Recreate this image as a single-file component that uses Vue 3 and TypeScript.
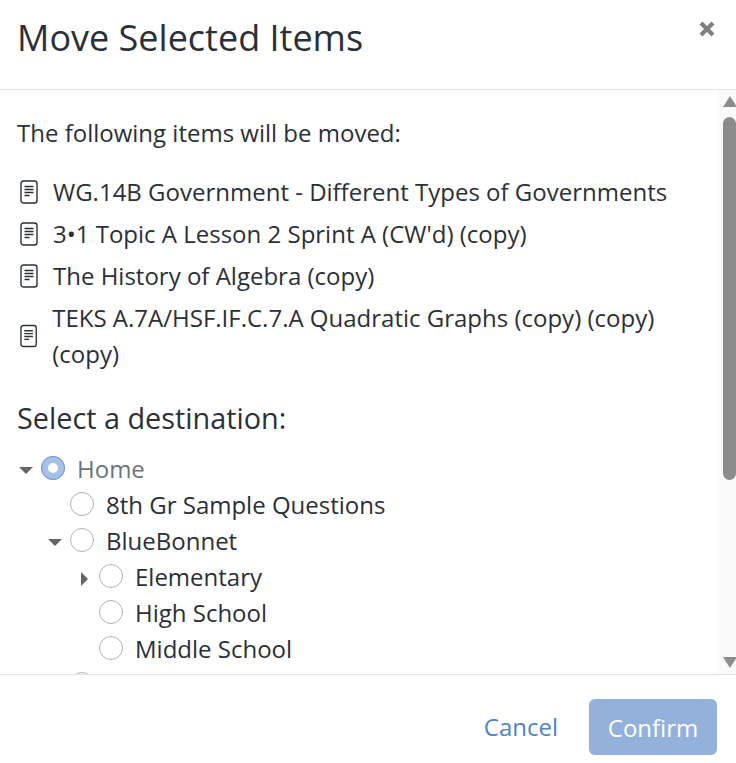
<script setup lang="ts">
interface TreeRow { label: string; depth: number; caret?: 'down' | 'right'; checked?: boolean }
const items = [
  'WG.14B Government - Different Types of Governments',
  "3•1 Topic A Lesson 2 Sprint A (CW'd) (copy)",
  'The History of Algebra (copy)',
  'TEKS A.7A/HSF.IF.C.7.A Quadratic Graphs (copy) (copy) (copy)',
]
const tree: TreeRow[] = [
  { label: 'Home', depth: 0, caret: 'down', checked: true },
  { label: '8th Gr Sample Questions', depth: 1 },
  { label: 'BlueBonnet', depth: 1, caret: 'down' },
  { label: 'Elementary', depth: 2, caret: 'right' },
  { label: 'High School', depth: 2 },
  { label: 'Middle School', depth: 2 },
  { label: '', depth: 1 },
]
</script>

<template>
  <div class="dialog">
    <header class="head">
      <h1>Move Selected Items</h1>
      <svg class="close" width="18" height="18" viewBox="0 0 18 18">
        <path d="M3 3 15 15M15 3 3 15" stroke="#808080" stroke-width="4.2" />
      </svg>
    </header>
    <main class="body">
      <div class="content">
        <p class="intro">The following items will be moved:</p>
        <ul class="items">
          <li v-for="item in items" :key="item">
            <svg class="doc" width="18" height="24" viewBox="0 0 18 24" fill="none">
              <rect x="1" y="1" width="16" height="22" rx="2.5" stroke="#2b3038" stroke-width="1.4" />
              <path d="M4.5 6.5h9M4.5 9.5h9M4.5 12.5h9M4.5 15.5h5" stroke="#2b3038" stroke-width="1.4" />
            </svg>
            <span>{{ item }}</span>
          </li>
        </ul>
        <h2>Select a destination:</h2>
        <div class="tree">
          <div v-for="(row, i) in tree" :key="i" class="row" :class="`d${row.depth}`">
            <span class="caret" :class="row.caret"></span>
            <span class="radio" :class="{ on: row.checked }"></span>
            <span class="label" :class="{ muted: row.checked }">{{ row.label }}</span>
          </div>
        </div>
      </div>
      <div class="scrollbar">
        <span class="arrow up"></span>
        <span class="thumb"></span>
        <span class="arrow down"></span>
      </div>
    </main>
    <footer class="foot">
      <a class="cancel">Cancel</a>
      <button class="confirm">Confirm</button>
    </footer>
  </div>
</template>

<style scoped>
.dialog {
  width: 736px;
  height: 763px;
  display: flex;
  flex-direction: column;
  background: #fff;
  color: #2b3038;
  font-family: "Open Sans", sans-serif;
  font-size: 24px;
  overflow: hidden;
}
.head {
  height: 90px;
  flex: none;
  box-sizing: border-box;
  border-bottom: 1px solid #e2e4e8;
  display: flex;
  justify-content: space-between;
  padding: 0 20px 0 17px;
}
h1 { margin: 12px 0 0; font-size: 36px; font-weight: 400; line-height: 52px; }
.close { margin-top: 20px; }
.body { flex: 1; min-height: 0; display: flex; overflow: hidden; }
.content { flex: 1; min-width: 0; padding: 0 0 0 17px; }
.intro { margin: 25px 0 0; line-height: 36px; }
.items { list-style: none; margin: 20px 0 0; padding: 0; }
.items li { display: flex; align-items: center; gap: 15px; padding: 3px 20px 3px 3px; line-height: 36px; }
.doc { flex: 0 1 18px; min-width: 0; }
h2 { margin: 21px 0 0; font-size: 28.8px; font-weight: 400; line-height: 44px; }
.tree { margin-top: 10px; }
.row { display: flex; align-items: center; height: 36px; }
.d0 { padding-left: 2px; }
.d1 { padding-left: 31px; }
.d2 { padding-left: 60px; }
.caret { width: 22px; flex: none; height: 12px; position: relative; }
.caret.down::after {
  content: "";
  position: absolute;
  left: 0;
  top: 5px;
  border-left: 7.5px solid transparent;
  border-right: 7.5px solid transparent;
  border-top: 7.5px solid #666;
}
.caret.right::after {
  content: "";
  position: absolute;
  left: 3.5px;
  top: 2px;
  border-top: 7px solid transparent;
  border-bottom: 7px solid transparent;
  border-left: 7px solid #666;
}
.radio {
  width: 24px;
  height: 24px;
  flex: none;
  box-sizing: border-box;
  border: 1px solid #aeb4bf;
  border-radius: 50%;
  background: #fff;
}
.radio.on { border: 7px solid #a8c0e4; outline: 1px solid #6a98d6; outline-offset: -1px; background: #fff; }
.label { margin-left: 12px; }
.muted { color: #6b7480; }
.scrollbar {
  width: 18px;
  flex: none;
  box-sizing: border-box;
  padding-left: 5px;
  background: #fafafa;
  display: flex;
  flex-direction: column;
  align-items: center;
}
.arrow { width: 0; height: 0; border-left: 7px solid transparent; border-right: 7px solid transparent; flex: none; }
.arrow.up { margin-top: 6px; border-bottom: 11px solid #8c8c8c; }
.arrow.down { margin-top: auto; margin-bottom: 6px; border-top: 11px solid #8c8c8c; }
.thumb { width: 13px; height: 363px; margin-top: 10px; border-radius: 7px; background: #8c8c8c; }
.foot {
  height: 89px;
  flex: none;
  box-sizing: border-box;
  border-top: 1px solid #e2e4e8;
  display: flex;
  align-items: flex-start;
  justify-content: flex-end;
  gap: 31px;
  padding: 24px 19px 0 0;
}
.cancel { color: #4f84c8; line-height: 56px; }
.confirm {
  width: 128px;
  height: 56px;
  border: 0;
  border-radius: 6px;
  background: #94b1dc;
  color: #fff;
  font: inherit;
  padding: 0;
}
</style>
